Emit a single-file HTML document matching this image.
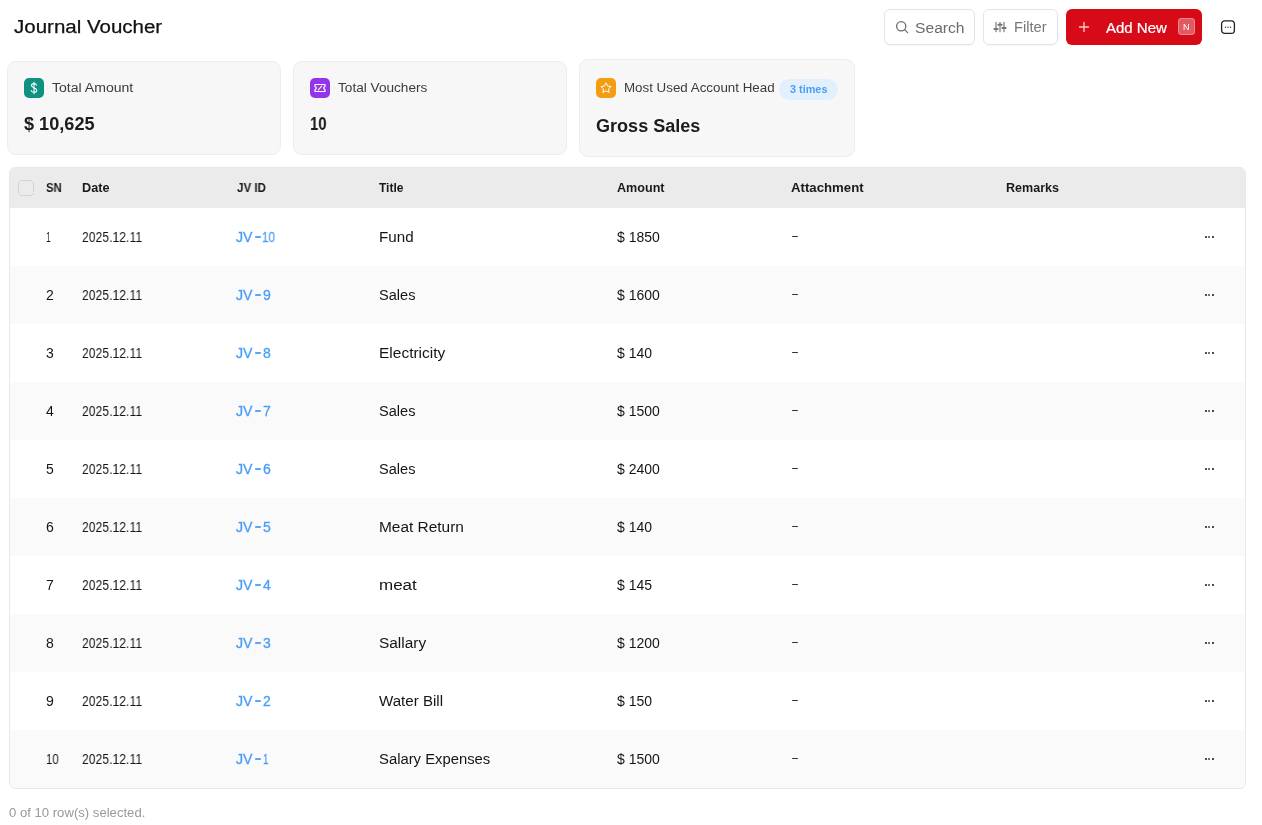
<!DOCTYPE html>
<html><head><meta charset="utf-8">
<style>
*{box-sizing:border-box;margin:0;padding:0}
html,body{width:1262px;height:825px;overflow:hidden;background:#fff;font-family:"Liberation Sans",sans-serif;color:#111;position:relative}
.abs{position:absolute}
.t{position:absolute;white-space:nowrap;transform-origin:0 0;display:block;will-change:transform}
.btn{position:absolute;top:9px;height:36px;border:1px solid #e3e3ec;border-radius:6px;background:#fff;box-shadow:0 1px 1px rgba(0,0,0,0.03)}
.card{position:absolute;background:#f7f7f8;border:1px solid #ececf1;border-radius:9px}
.ic{position:absolute;width:20px;height:20px;border-radius:5px}
.table{position:absolute;left:9px;top:167px;width:1237px;height:622px;border:1px solid #e8e7f1;border-radius:6px;overflow:hidden;background:#fff}
.thead{position:absolute;left:0;top:0;width:100%;height:40px;background:#ebebeb}
.th{font-size:12px;font-weight:bold;line-height:14px;color:#1a1a1a}
.row{position:absolute;left:0;width:100%;height:58px;background:#fff}
.row.alt{background:#fafafa}
.c{font-size:14px;line-height:16px;color:#151515;top:21px}
.jvc{color:#4a9ff5;-webkit-text-stroke:0.3px #4a9ff5}
.dots{position:absolute;left:1194.5px;top:28px;width:12px;height:4px}
.dots i{position:absolute;top:0;width:2.1px;height:2.3px;background:#111;border-radius:1px}
.dots i:nth-child(1){left:0}.dots i:nth-child(2){left:3.5px;background:#444}.dots i:nth-child(3){left:7px}
</style></head><body>
<span class="t " style="left:14px;top:16px;transform:scaleX(1.1390);font-size:18px;line-height:22px;color:#121212;-webkit-text-stroke:0.25px #121212">Journal Voucher</span>
<div class="btn" style="left:884px;width:91px"></div>
<svg class="abs" style="left:895px;top:20px" width="14" height="14" viewBox="0 0 14 14"><circle cx="6.2" cy="6.2" r="4.6" fill="none" stroke="#6b6b6b" stroke-width="1.3"/><path d="M9.6 9.6 L12.6 12.6" stroke="#6b6b6b" stroke-width="1.3" stroke-linecap="round"/></svg>
<span class="t " style="left:915px;top:20px;transform:scaleX(1.1170);font-size:14px;line-height:16px;color:#6b6b6b">Search</span>
<div class="btn" style="left:983px;width:75px"></div>
<svg class="abs" style="left:993px;top:21px" width="14" height="12" viewBox="0 0 14 12"><path d="M3 1.3V10.7M7 1.3V10.7M11 1.3V10.7" stroke="#808080" stroke-width="1.25" stroke-linecap="round"/><path d="M1.4 7.9H4.6M5.4 3.8H8.6M9.4 7H12.6" stroke="#777" stroke-width="2" stroke-linecap="round"/></svg>
<span class="t " style="left:1014px;top:18.5px;transform:scaleX(1.0470);font-size:14px;line-height:16px;color:#777">Filter</span>
<div class="abs" style="left:1066px;top:9px;width:136px;height:36px;background:#d70a17;border-radius:6px"></div>
<svg class="abs" style="left:1078px;top:21px" width="12" height="12" viewBox="0 0 12 12"><path d="M6 1.5V10.5M1.5 6H10.5" stroke="#f4c8c8" stroke-width="1.4" stroke-linecap="round"/></svg>
<span class="t " style="left:1106px;top:20px;transform:scaleX(1.0720);font-size:14px;line-height:16px;color:#fff;-webkit-text-stroke:0.2px #fff">Add New</span>
<div class="abs" style="left:1178px;top:18px;width:17px;height:17px;background:#e25a60;border:1px solid #ee8a8e;border-radius:3px"></div>
<span class="t " style="left:1183px;top:21.5px;transform:scaleX(1.0000);font-size:9px;line-height:10px;color:#fff">N</span>
<svg class="abs" style="left:1220px;top:19px" width="16" height="16" viewBox="0 0 16 16"><rect x="1.6" y="1.8" width="12.8" height="12.6" rx="3.2" fill="none" stroke="#222" stroke-width="1.3"/><circle cx="5.5" cy="8.2" r="0.7" fill="#333"/><circle cx="8" cy="8.2" r="0.7" fill="#333"/><circle cx="10.5" cy="8.2" r="0.7" fill="#333"/></svg>
<div class="card" style="left:7px;top:61px;width:274px;height:94px"></div>
<div class="card" style="left:293px;top:61px;width:274px;height:94px"></div>
<div class="card" style="left:579px;top:59px;width:276px;height:98px"></div>
<div class="ic" style="left:24px;top:78px;background:#0f9080"></div>
<svg class="abs" style="left:24px;top:78px" width="20" height="20" viewBox="0 0 20 20"><path d="M12.6 7.2C12.3 6.2 11.3 5.6 10 5.6C8.5 5.6 7.4 6.4 7.4 7.6C7.4 10.2 12.7 9.2 12.7 12.2C12.7 13.5 11.5 14.3 10 14.3C8.5 14.3 7.5 13.6 7.2 12.6M10 4.2V15.8" fill="none" stroke="#fff" stroke-width="1.05" stroke-linecap="round"/></svg>
<div class="ic" style="left:310px;top:78px;background:#9334e9"></div>
<svg class="abs" style="left:310px;top:78px" width="20" height="20" viewBox="0 0 20 20"><path d="M5 6.5H15V8.6C14.2 8.8 13.7 9.4 13.7 10.1C13.7 10.8 14.2 11.4 15 11.6V13.5H5V11.6C5.8 11.4 6.3 10.8 6.3 10.1C6.3 9.4 5.8 8.8 5 8.6Z" fill="none" stroke="#fff" stroke-width="1.2" stroke-linejoin="round"/><path d="M8.3 11.8L11.7 8.2" stroke="#fff" stroke-width="1.1" stroke-linecap="round"/></svg>
<div class="ic" style="left:596px;top:78px;background:#f49c12"></div>
<svg class="abs" style="left:596px;top:78px" width="20" height="20" viewBox="0 0 20 20"><path d="M10 4.8L11.55 8.05L15.1 8.5L12.5 10.95L13.15 14.5L10 12.8L6.85 14.5L7.5 10.95L4.9 8.5L8.45 8.05Z" fill="none" stroke="#fff" stroke-width="1.0" stroke-linejoin="round"/></svg>
<span class="t " style="left:52px;top:81px;transform:scaleX(1.1710);font-size:12px;line-height:14px;color:#3b3b3b">Total Amount</span>
<span class="t " style="left:338px;top:81px;transform:scaleX(1.1350);font-size:12px;line-height:14px;color:#3b3b3b">Total Vouchers</span>
<span class="t " style="left:624px;top:81px;transform:scaleX(1.1120);font-size:12px;line-height:14px;color:#3b3b3b">Most Used Account Head</span>
<span class="t " style="left:24px;top:113px;transform:scaleX(1.0070);font-size:18px;line-height:22px;color:#1c1c1c;font-weight:bold">$ 10,625</span>
<span class="t " style="left:310px;top:113px;transform:scaleX(0.8272);font-size:18px;line-height:22px;color:#1c1c1c;font-weight:bold">10</span>
<span class="t " style="left:596px;top:115px;transform:scaleX(1.0030);font-size:18px;line-height:22px;color:#1c1c1c;font-weight:bold">Gross Sales</span>
<div class="abs" style="left:779px;top:79px;width:59px;height:21px;background:#e2effc;border-radius:11px"></div>
<span class="t " style="left:790px;top:83px;transform:scaleX(1.0343);font-size:10.5px;line-height:12px;color:#4a9ff5;font-weight:bold">3 times</span>
<div class="table"><div class="thead">
<svg class="abs" style="left:8px;top:12px" width="16" height="16" viewBox="0 0 16 16"><rect x="0.5" y="0.5" width="15" height="15" rx="3.5" fill="none" stroke="#bdbdbd" stroke-width="0.9" stroke-dasharray="1.6 1.2"/></svg>
<span class="t th" style="left:36px;top:13px;transform:scaleX(0.9440);">SN</span>
<span class="t th" style="left:72px;top:13px;transform:scaleX(1.0580);">Date</span>
<span class="t th" style="left:227px;top:13px;transform:scaleX(0.9670);">JV ID</span>
<span class="t th" style="left:369px;top:13px;transform:scaleX(0.9800);">Title</span>
<span class="t th" style="left:607px;top:13px;transform:scaleX(1.0480);">Amount</span>
<span class="t th" style="left:781px;top:13px;transform:scaleX(1.1000);">Attachment</span>
<span class="t th" style="left:996px;top:13px;transform:scaleX(1.0450);">Remarks</span>
</div>
<div class="row" style="top:40px">
<span class="t c" style="left:36px;top:21px;transform:scaleX(0.6200);">1</span>
<span class="t c" style="left:72px;top:21px;transform:scaleX(0.8710);">2025.12.11</span>
<span class="t c jvc" style="left:226px;top:21px;transform:scaleX(1.0120);">JV</span>
<div class="abs" style="left:245px;top:28.1px;width:6px;height:1.7px;background:#5aa8f6;border-radius:0.8px"></div>
<span class="t c jvc" style="left:251.5px;top:21px;transform:scaleX(0.8300);">10</span>
<span class="t c" style="left:369px;top:21px;transform:scaleX(1.0835);">Fund</span>
<span class="t c" style="left:607px;top:21px;transform:scaleX(0.9910);">$ 1850</span>
<div class="abs" style="left:782px;top:28.1px;width:6px;height:1.35px;background:#333;border-radius:0.6px"></div>
<span class="dots"><i></i><i></i><i></i></span></div>
<div class="row alt" style="top:98px">
<span class="t c" style="left:36px;top:21px;transform:scaleX(1.0000);">2</span>
<span class="t c" style="left:72px;top:21px;transform:scaleX(0.8710);">2025.12.11</span>
<span class="t c jvc" style="left:226px;top:21px;transform:scaleX(1.0120);">JV</span>
<div class="abs" style="left:245px;top:28.1px;width:6px;height:1.7px;background:#5aa8f6;border-radius:0.8px"></div>
<span class="t c jvc" style="left:252.5px;top:21px;transform:scaleX(1.0000);">9</span>
<span class="t c" style="left:369px;top:21px;transform:scaleX(1.0395);">Sales</span>
<span class="t c" style="left:607px;top:21px;transform:scaleX(0.9910);">$ 1600</span>
<div class="abs" style="left:782px;top:28.1px;width:6px;height:1.35px;background:#333;border-radius:0.6px"></div>
<span class="dots"><i></i><i></i><i></i></span></div>
<div class="row" style="top:156px">
<span class="t c" style="left:36px;top:21px;transform:scaleX(1.0000);">3</span>
<span class="t c" style="left:72px;top:21px;transform:scaleX(0.8710);">2025.12.11</span>
<span class="t c jvc" style="left:226px;top:21px;transform:scaleX(1.0120);">JV</span>
<div class="abs" style="left:245px;top:28.1px;width:6px;height:1.7px;background:#5aa8f6;border-radius:0.8px"></div>
<span class="t c jvc" style="left:252.5px;top:21px;transform:scaleX(1.0000);">8</span>
<span class="t c" style="left:369px;top:21px;transform:scaleX(1.1066);">Electricity</span>
<span class="t c" style="left:607px;top:21px;transform:scaleX(0.9910);">$ 140</span>
<div class="abs" style="left:782px;top:28.1px;width:6px;height:1.35px;background:#333;border-radius:0.6px"></div>
<span class="dots"><i></i><i></i><i></i></span></div>
<div class="row alt" style="top:214px">
<span class="t c" style="left:36px;top:21px;transform:scaleX(1.0000);">4</span>
<span class="t c" style="left:72px;top:21px;transform:scaleX(0.8710);">2025.12.11</span>
<span class="t c jvc" style="left:226px;top:21px;transform:scaleX(1.0120);">JV</span>
<div class="abs" style="left:245px;top:28.1px;width:6px;height:1.7px;background:#5aa8f6;border-radius:0.8px"></div>
<span class="t c jvc" style="left:252.5px;top:21px;transform:scaleX(1.0000);">7</span>
<span class="t c" style="left:369px;top:21px;transform:scaleX(1.0395);">Sales</span>
<span class="t c" style="left:607px;top:21px;transform:scaleX(0.9910);">$ 1500</span>
<div class="abs" style="left:782px;top:28.1px;width:6px;height:1.35px;background:#333;border-radius:0.6px"></div>
<span class="dots"><i></i><i></i><i></i></span></div>
<div class="row" style="top:272px">
<span class="t c" style="left:36px;top:21px;transform:scaleX(1.0000);">5</span>
<span class="t c" style="left:72px;top:21px;transform:scaleX(0.8710);">2025.12.11</span>
<span class="t c jvc" style="left:226px;top:21px;transform:scaleX(1.0120);">JV</span>
<div class="abs" style="left:245px;top:28.1px;width:6px;height:1.7px;background:#5aa8f6;border-radius:0.8px"></div>
<span class="t c jvc" style="left:252.5px;top:21px;transform:scaleX(1.0000);">6</span>
<span class="t c" style="left:369px;top:21px;transform:scaleX(1.0395);">Sales</span>
<span class="t c" style="left:607px;top:21px;transform:scaleX(0.9910);">$ 2400</span>
<div class="abs" style="left:782px;top:28.1px;width:6px;height:1.35px;background:#333;border-radius:0.6px"></div>
<span class="dots"><i></i><i></i><i></i></span></div>
<div class="row alt" style="top:330px">
<span class="t c" style="left:36px;top:21px;transform:scaleX(1.0000);">6</span>
<span class="t c" style="left:72px;top:21px;transform:scaleX(0.8710);">2025.12.11</span>
<span class="t c jvc" style="left:226px;top:21px;transform:scaleX(1.0120);">JV</span>
<div class="abs" style="left:245px;top:28.1px;width:6px;height:1.7px;background:#5aa8f6;border-radius:0.8px"></div>
<span class="t c jvc" style="left:252.5px;top:21px;transform:scaleX(1.0000);">5</span>
<span class="t c" style="left:369px;top:21px;transform:scaleX(1.1022);">Meat Return</span>
<span class="t c" style="left:607px;top:21px;transform:scaleX(0.9910);">$ 140</span>
<div class="abs" style="left:782px;top:28.1px;width:6px;height:1.35px;background:#333;border-radius:0.6px"></div>
<span class="dots"><i></i><i></i><i></i></span></div>
<div class="row" style="top:388px">
<span class="t c" style="left:36px;top:21px;transform:scaleX(1.0000);">7</span>
<span class="t c" style="left:72px;top:21px;transform:scaleX(0.8710);">2025.12.11</span>
<span class="t c jvc" style="left:226px;top:21px;transform:scaleX(1.0120);">JV</span>
<div class="abs" style="left:245px;top:28.1px;width:6px;height:1.7px;background:#5aa8f6;border-radius:0.8px"></div>
<span class="t c jvc" style="left:252.5px;top:21px;transform:scaleX(1.0000);">4</span>
<span class="t c" style="left:369px;top:21px;transform:scaleX(1.2139);">meat</span>
<span class="t c" style="left:607px;top:21px;transform:scaleX(0.9910);">$ 145</span>
<div class="abs" style="left:782px;top:28.1px;width:6px;height:1.35px;background:#333;border-radius:0.6px"></div>
<span class="dots"><i></i><i></i><i></i></span></div>
<div class="row alt" style="top:446px">
<span class="t c" style="left:36px;top:21px;transform:scaleX(1.0000);">8</span>
<span class="t c" style="left:72px;top:21px;transform:scaleX(0.8710);">2025.12.11</span>
<span class="t c jvc" style="left:226px;top:21px;transform:scaleX(1.0120);">JV</span>
<div class="abs" style="left:245px;top:28.1px;width:6px;height:1.7px;background:#5aa8f6;border-radius:0.8px"></div>
<span class="t c jvc" style="left:252.5px;top:21px;transform:scaleX(1.0000);">3</span>
<span class="t c" style="left:369px;top:21px;transform:scaleX(1.1007);">Sallary</span>
<span class="t c" style="left:607px;top:21px;transform:scaleX(0.9910);">$ 1200</span>
<div class="abs" style="left:782px;top:28.1px;width:6px;height:1.35px;background:#333;border-radius:0.6px"></div>
<span class="dots"><i></i><i></i><i></i></span></div>
<div class="row" style="top:504px">
<span class="t c" style="left:36px;top:21px;transform:scaleX(1.0000);">9</span>
<span class="t c" style="left:72px;top:21px;transform:scaleX(0.8710);">2025.12.11</span>
<span class="t c jvc" style="left:226px;top:21px;transform:scaleX(1.0120);">JV</span>
<div class="abs" style="left:245px;top:28.1px;width:6px;height:1.7px;background:#5aa8f6;border-radius:0.8px"></div>
<span class="t c jvc" style="left:252.5px;top:21px;transform:scaleX(1.0000);">2</span>
<span class="t c" style="left:369px;top:21px;transform:scaleX(1.0780);">Water Bill</span>
<span class="t c" style="left:607px;top:21px;transform:scaleX(0.9910);">$ 150</span>
<div class="abs" style="left:782px;top:28.1px;width:6px;height:1.35px;background:#333;border-radius:0.6px"></div>
<span class="dots"><i></i><i></i><i></i></span></div>
<div class="row alt" style="top:562px">
<span class="t c" style="left:36px;top:21px;transform:scaleX(0.8200);">10</span>
<span class="t c" style="left:72px;top:21px;transform:scaleX(0.8710);">2025.12.11</span>
<span class="t c jvc" style="left:226px;top:21px;transform:scaleX(1.0120);">JV</span>
<div class="abs" style="left:245px;top:28.1px;width:6px;height:1.7px;background:#5aa8f6;border-radius:0.8px"></div>
<span class="t c jvc" style="left:252.5px;top:21px;transform:scaleX(0.7000);">1</span>
<span class="t c" style="left:369px;top:21px;transform:scaleX(1.0593);">Salary Expenses</span>
<span class="t c" style="left:607px;top:21px;transform:scaleX(0.9910);">$ 1500</span>
<div class="abs" style="left:782px;top:28.1px;width:6px;height:1.35px;background:#333;border-radius:0.6px"></div>
<span class="dots"><i></i><i></i><i></i></span></div>
</div>
<span class="t " style="left:9px;top:806px;transform:scaleX(1.0930);font-size:12px;line-height:14px;color:#999">0 of 10 row(s) selected.</span>
</body></html>
